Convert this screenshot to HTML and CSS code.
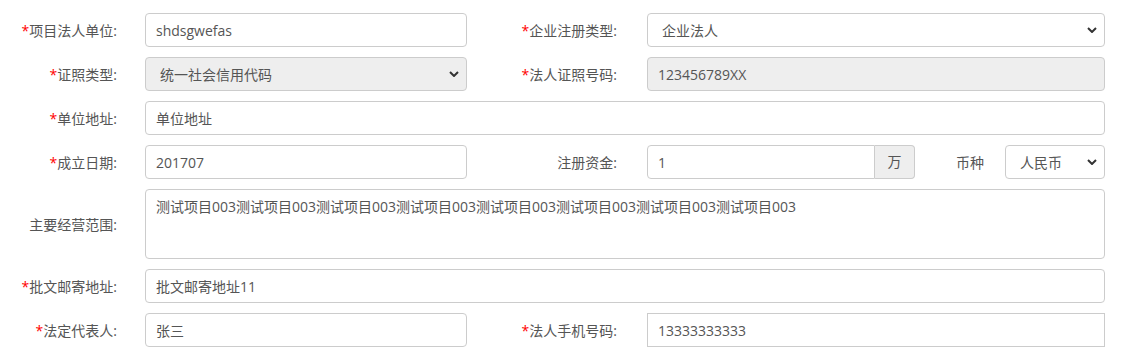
FILE: index.html
```html
<!DOCTYPE html>
<html lang="zh-CN">
<head>
  <meta charset="utf-8">
  <title>项目法人信息</title>
  <link rel="stylesheet" href="styles.css">
</head>
<body>
  <form class="info-form">
    <div class="form-row">
      <label class="field-label"><span class="req">*</span>项目法人单位:</label>
      <input class="field" type="text" value="shdsgwefas">
      <label class="field-label right"><span class="req">*</span>企业注册类型:</label>
      <select class="field select">
        <option>企业法人</option>
      </select>
    </div>
    <div class="form-row">
      <label class="field-label"><span class="req">*</span>证照类型:</label>
      <select class="field select" disabled>
        <option>统一社会信用代码</option>
      </select>
      <label class="field-label right"><span class="req">*</span>法人证照号码:</label>
      <input class="field" type="text" value="123456789XX" disabled>
    </div>
    <div class="form-row">
      <label class="field-label"><span class="req">*</span>单位地址:</label>
      <input class="field wide" type="text" value="单位地址">
    </div>
    <div class="form-row">
      <label class="field-label"><span class="req">*</span>成立日期:</label>
      <input class="field" type="text" value="201707">
      <label class="field-label right">注册资金:</label>
      <div class="money">
        <div class="input-group">
          <input class="field" type="text" value="1">
          <span class="addon">万</span>
        </div>
        <span class="currency-label">币种</span>
        <select class="field select">
          <option>人民币</option>
        </select>
      </div>
    </div>
    <div class="form-row tall">
      <label class="field-label">主要经营范围:</label>
      <textarea class="field wide area">测试项目003测试项目003测试项目003测试项目003测试项目003测试项目003测试项目003测试项目003</textarea>
    </div>
    <div class="form-row">
      <label class="field-label"><span class="req">*</span>批文邮寄地址:</label>
      <input class="field wide" type="text" value="批文邮寄地址11">
    </div>
    <div class="form-row">
      <label class="field-label"><span class="req">*</span>法定代表人:</label>
      <input class="field" type="text" value="张三">
      <label class="field-label right"><span class="req">*</span>法人手机号码:</label>
      <input class="field square" type="text" value="13333333333">
    </div>
  </form>
</body>
</html>
```

FILE: styles.css
```css
body {
  margin: 0;
  background: #fff;
  font-family: "Open Sans", "Noto Sans CJK SC", sans-serif;
  font-size: 14px;
  color: #555;
}
.info-form {
  padding-top: 13px;
  width: 1105px;
}
.form-row {
  display: grid;
  grid-template-columns: 145px 322px 180px 458px;
  height: 34px;
  margin-bottom: 10px;
  align-items: center;
}
.form-row.tall {
  height: 70px;
}
.field-label {
  text-align: right;
  padding-right: 28px;
  color: #555;
  white-space: nowrap;
}
.field-label.right {
  padding-right: 30px;
}
.req {
  color: #f00;
}
.field {
  box-sizing: border-box;
  height: 34px;
  width: 100%;
  margin: 0;
  padding: 0 10px;
  border: 1px solid #ccc;
  border-radius: 4px;
  background: #fff;
  font-family: inherit;
  font-size: 14px;
  color: #555;
  outline: none;
}
.field:disabled {
  background-color: #eee;
  color: #555;
  opacity: 1;
}
.field.wide {
  grid-column: 2 / 5;
}
.field.square {
  border-radius: 0;
}
.field.area {
  height: 70px;
  padding: 7px 10px;
  resize: none;
  line-height: 20px;
}
.select {
  appearance: none;
  -webkit-appearance: none;
  padding-left: 14px;
  background-image: url("data:image/svg+xml;utf8,<svg xmlns='http://www.w3.org/2000/svg' width='10' height='6' viewBox='0 0 10 6'><path d='M1 1 L5 5 L9 1' fill='none' stroke='%23333' stroke-width='2'/></svg>");
  background-repeat: no-repeat;
  background-position: right 7px center;
}
.money {
  display: flex;
  align-items: center;
}
.input-group {
  display: flex;
  width: 268px;
}
.input-group .field {
  border-radius: 4px 0 0 4px;
}
.addon {
  box-sizing: border-box;
  flex: 0 0 40px;
  height: 34px;
  line-height: 32px;
  text-align: center;
  border: 1px solid #ccc;
  border-left: 0;
  border-radius: 0 4px 4px 0;
  background: #eee;
  color: #555;
}
.currency-label {
  box-sizing: border-box;
  width: 90px;
  padding-left: 20px;
  text-align: center;
}
.money .select {
  width: 100px;
}
```
